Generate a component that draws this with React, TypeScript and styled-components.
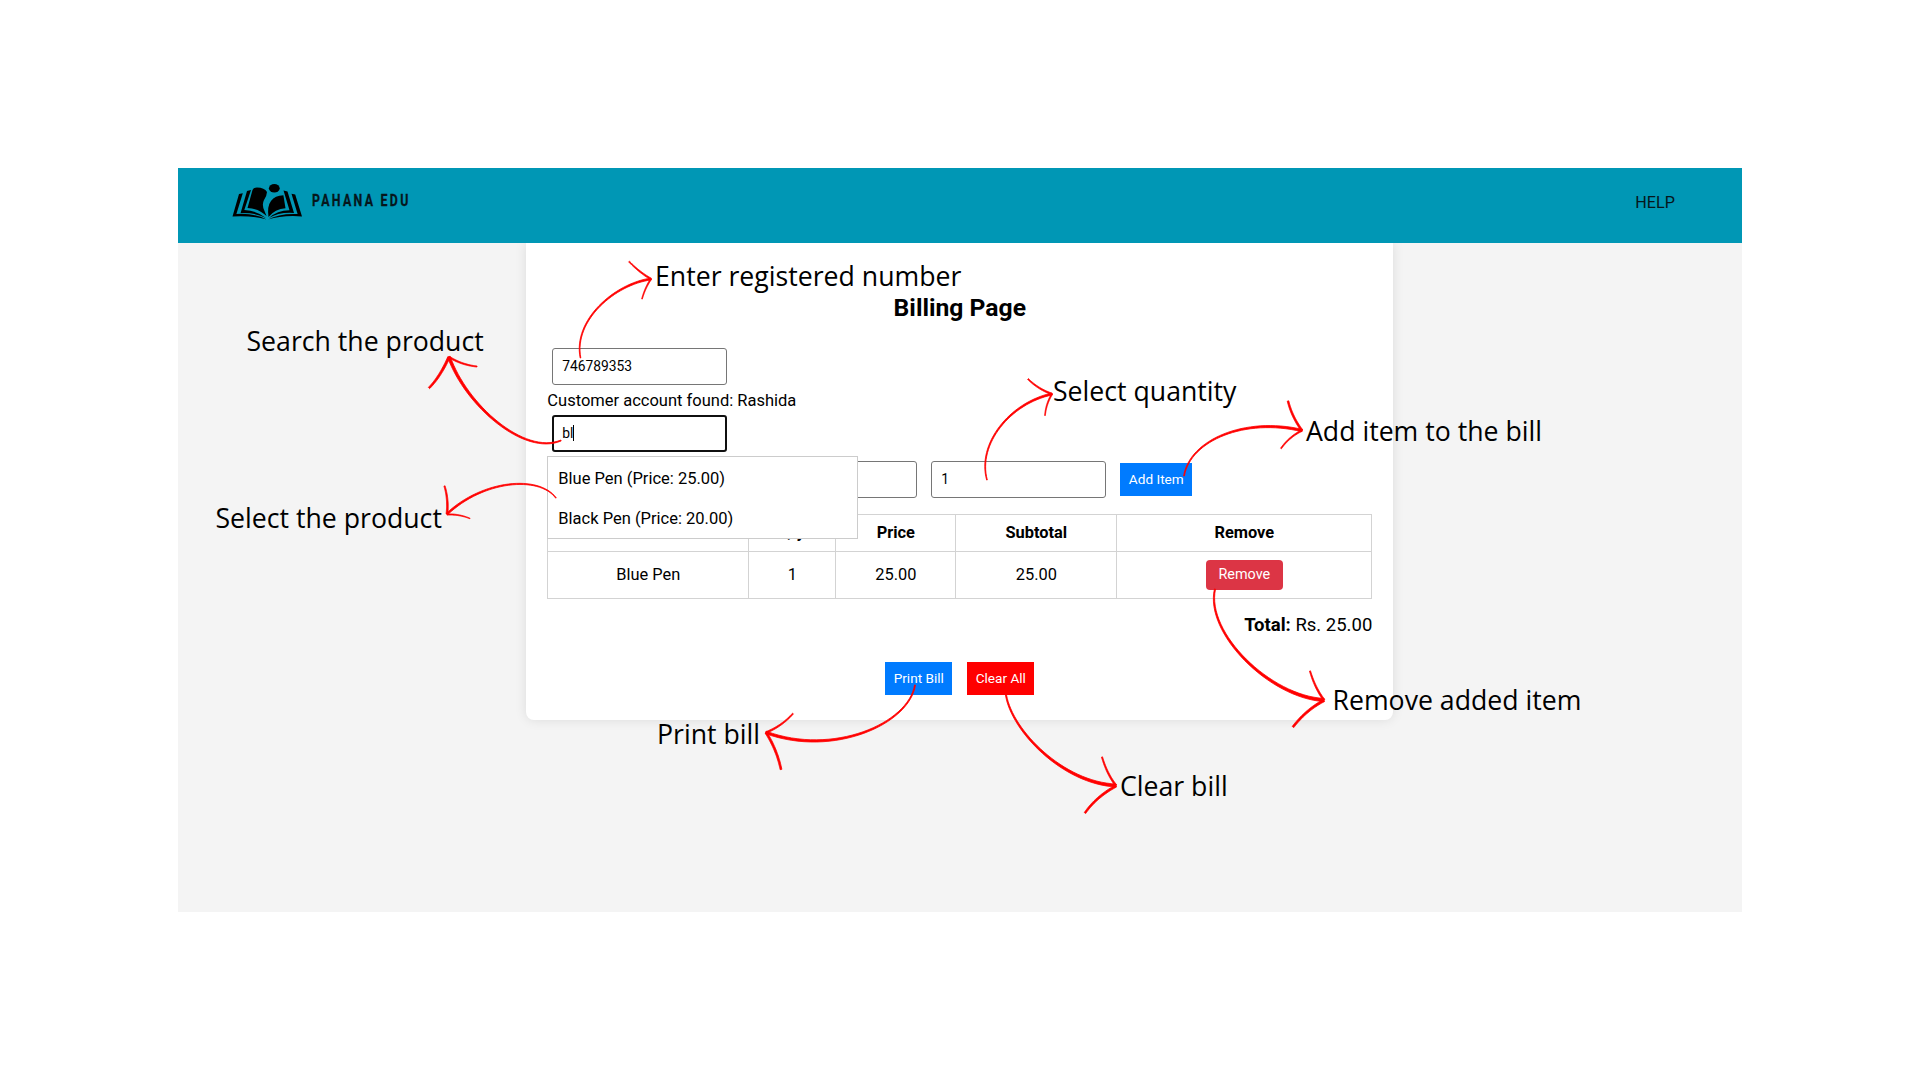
import React from "react";
import styled, { createGlobalStyle } from "styled-components";

const Global = createGlobalStyle`
  *, *::before, *::after { box-sizing: border-box; }
  body { margin: 0; background: #fff; font-family: Roboto, "Liberation Sans", sans-serif; color: #000; }
`;

const Slide = styled.main`
  position: relative;
  width: 1920px;
  height: 1080px;
  padding: 168px 178px 0;
  overflow: hidden;
`;

const Frame = styled.section`
  width: 1564px;
  height: 744px;
  background: #f4f4f4;
  display: flex;
  flex-direction: column;
  align-items: center;
  overflow: hidden;
`;

const Header = styled.header`
  position: relative;
  z-index: 1;
  width: 100%;
  height: 75px;
  flex: none;
  background: #0097b5;
  display: flex;
  justify-content: space-between;
  padding: 0 67px 0 54px;
`;

const Brand = styled.div`
  display: flex;
  padding-top: 15px;
`;

const BrandName = styled.span`
  margin: 8px 0 0 9px;
  font: 700 16px/20px Roboto, sans-serif;
  letter-spacing: 3px;
  transform: scaleX(0.77);
  transform-origin: left;
  white-space: nowrap;
  color: #06161c;
  -webkit-text-stroke: 0.3px #06161c;
`;

const HelpLink = styled.a`
  margin-top: 25px;
  font-size: 16.2px;
  line-height: 20px;
  color: #06161c;
`;

const Card = styled.div`
  width: 867px;
  height: 477px;
  flex: none;
  margin-right: 0.4px;
  padding: 50px 21px 0;
  background: #fff;
  border-radius: 0 0 8px 8px;
  box-shadow: 0 0 12px rgba(0, 0, 0, 0.1);
`;

const Title = styled.h1`
  margin: 0 0 25px;
  font-size: 24.7px;
  line-height: 30px;
  font-weight: 700;
  text-align: center;
`;

const Field = styled.div<{ $active?: boolean }>`
  width: 175px;
  height: 37px;
  display: flex;
  align-items: center;
  padding-left: ${(p) => (p.$active ? 8 : 9)}px;
  padding-bottom: 1px;
  border: ${(p) => (p.$active ? "2px solid #101010" : "1px solid #767676")};
  border-radius: 3px;
  background: #fff;
  font-size: 13.8px;
`;

const Caret = styled.i`
  width: 1px;
  height: 16px;
  background: #000;
`;

const FormColumn = styled.div`
  padding-left: 5px;
`;

const Note = styled.p`
  margin: 6px 0 5px -5px;
  font-size: 16.5px;
  line-height: 19px;
`;

const Lookup = styled.div`
  position: relative;
`;

const Suggestions = styled.ul`
  position: absolute;
  z-index: 2;
  top: 41px;
  left: -5px;
  width: 311px;
  height: 83px;
  margin: 0;
  padding: 2px 10px 0;
  list-style: none;
  background: #fff;
  border: 1px solid #ccc;
`;

const Suggestion = styled.li`
  font-size: 16.5px;
  line-height: 40px;
`;

const ItemRow = styled.div`
  display: flex;
  align-items: center;
  gap: 14px;
  margin-top: 9px;
  padding-left: 195px;
`;

const Button = styled.button<{ $tone: string; $w: number }>`
  width: ${(p) => p.$w}px;
  height: 33px;
  padding: 0 0 1px;
  border: 0;
  background: ${(p) => p.$tone};
  color: #fff;
  font: 13.6px Roboto, sans-serif;
`;

const RemoveButton = styled.button`
  display: block;
  width: 77px;
  height: 30px;
  margin: 0 auto;
  padding: 0;
  border: 0;
  border-radius: 4px;
  background: #dc3545;
  color: #fff;
  font: 14.4px Roboto, sans-serif;
`;

const Table = styled.table`
  width: 825px;
  margin-top: 16px;
  table-layout: fixed;
  border-collapse: collapse;
  font-size: 16.4px;
  text-align: center;
  th, td { border: 1px solid #d3d3d3; padding: 0 0 1px; }
  thead tr { height: 37px; }
  tbody tr { height: 47px; }
`;

const Total = styled.p`
  margin: 15px 0 26px;
  font-size: 18.5px;
  line-height: 22px;
  text-align: right;
`;

const Actions = styled.div`
  display: flex;
  justify-content: center;
  gap: 15px;
`;

const Overlay = styled.svg`
  position: absolute;
  z-index: 3;
  inset: 0;
`;

const Label = styled.span<{ $x: number; $y: number }>`
  position: absolute;
  z-index: 4;
  left: ${(p) => p.$x}px;
  top: ${(p) => p.$y}px;
  font: 400 26.67px/36px "Open Sans", sans-serif;
  white-space: nowrap;
`;

const BookLogo = () => (
  <svg width="71" height="37" viewBox="0 0 71 37">
    <path d="M20.5 7 Q21.5 4.5 25 4.5 Q32.5 4.5 35 9 Q34.8 13 32 17 Q29.5 22 32.5 28 L34.5 33 Q27 25.5 15.5 25 Z" />
    <path d="M15 8 L19 7 L12.3 27 Q26 28 34 35 Q24 29.5 8.6 30 Z" />
    <path d="M7 11 L10.8 10.3 L4.4 31 Q24 30 34.5 36.6 Q20 32.4 0.5 33.5 Z" />
    <ellipse cx="42.3" cy="5.3" rx="5.4" ry="4.3" />
    <path d="M36.5 34 Q35 23 39 18 Q43 12.5 51.4 12.3 L53.5 25.3 Q43 26 36.5 34Z" />
    <path d="M51.5 7.5 L55.5 8.5 L62 30 Q47 29 37 35 Q45 27.3 57.5 27.2 Z" />
    <path d="M59.5 10.8 L63.2 11.6 L70 33.4 Q50 32 36 36.6 Q47 30.2 65.6 31Z" />
  </svg>
);

type Stroke = { points: number[]; from: number; to: number };

/* Outlines a quadratic or cubic curve whose thickness changes along its length. */
function taper({ points, from, to }: Stroke) {
  const left: string[] = [];
  const right: string[] = [];
  const cubic = points.length === 8;
  const [x0, y0, x1, y1, x2, y2] = points;
  const [x3, y3] = points.slice(6);
  for (let i = 0; i <= 32; i++) {
    const t = i / 32;
    const u = 1 - t;
    const at = (a: number, b: number, c: number, d: number) =>
      cubic ? u * u * u * a + 3 * u * u * t * b + 3 * u * t * t * c + t * t * t * d : u * u * a + 2 * u * t * b + t * t * c;
    const slope = (a: number, b: number, c: number, d: number) =>
      cubic ? u * u * (b - a) + 2 * u * t * (c - b) + t * t * (d - c) : u * (b - a) + t * (c - b);
    const x = at(x0, x1, x2, x3);
    const y = at(y0, y1, y2, y3);
    const dx = slope(x0, x1, x2, x3);
    const dy = slope(y0, y1, y2, y3);
    const half = (from + (to - from) * t) / 2 / Math.hypot(dx, dy);
    left.push(`${(x - dy * half).toFixed(2)} ${(y + dx * half).toFixed(2)}`);
    right.unshift(`${(x + dy * half).toFixed(2)} ${(y - dx * half).toFixed(2)}`);
  }
  return `M${left.join("L")}L${right.join("L")}Z`;
}

const strokes: Stroke[] = [
  { points: [580.5, 358, 573, 320, 615, 284, 651, 279], from: 0.7, to: 1.9 },
  { points: [629, 261.5, 639, 272, 651, 279], from: 1, to: 1.6 },
  { points: [642, 299, 645, 288, 651, 279], from: 0.7, to: 1.3 },

  { points: [561, 440.5, 524, 456, 466, 405, 449, 357], from: 1, to: 2.8 },
  { points: [477, 366.5, 462, 365, 449, 357], from: 1, to: 1.6 },
  { points: [429, 388, 440, 377, 449, 357], from: 1.8, to: 2.4 },

  { points: [556, 498, 539, 475, 483, 480, 447, 514], from: 0.6, to: 1.9 },
  { points: [444.5, 486, 448.5, 499, 447, 514], from: 1.2, to: 1.8 },
  { points: [470, 518.5, 459, 514, 447, 514.5], from: 0.6, to: 1.2 },

  { points: [987, 480, 977, 444, 1010, 403, 1052, 394], from: 0.7, to: 2 },
  { points: [1028, 379, 1038, 389, 1052, 394], from: 1.1, to: 1.6 },
  { points: [1045, 415.5, 1046, 404, 1052, 394], from: 0.7, to: 1.3 },

  { points: [1184, 476, 1190, 440, 1245, 417, 1302, 430.5], from: 0.8, to: 2.4 },
  { points: [1288, 401, 1292, 417, 1302, 430.5], from: 1.6, to: 2 },
  { points: [1281, 448.5, 1289, 437, 1302, 430.5], from: 1, to: 1.5 },

  { points: [1215, 589, 1205, 633, 1270, 697, 1324, 700], from: 1.1, to: 3.2 },
  { points: [1310, 671, 1315, 688, 1324, 700], from: 1.1, to: 1.9 },
  { points: [1293, 727, 1306, 710, 1324, 700.5], from: 2, to: 2.4 },

  { points: [915, 685, 909, 724, 833, 757, 766, 732.5], from: 0.9, to: 2.6 },
  { points: [793, 713.5, 782, 726, 766, 732.5], from: 1.1, to: 1.7 },
  { points: [781, 769.5, 777, 750, 766, 732.5], from: 1.8, to: 2.2 },

  { points: [1006, 695, 1012, 731, 1063, 783, 1116, 785.5], from: 1.1, to: 3 },
  { points: [1102, 757, 1107, 774, 1116, 785.5], from: 1.1, to: 1.8 },
  { points: [1085, 813, 1096, 797, 1116, 786], from: 1.8, to: 2.3 },
];

const labels = [
  { text: "Enter registered number", x: 655, y: 258 },
  { text: "Search the product", x: 246.5, y: 323 },
  { text: "Select the product", x: 215.5, y: 500 },
  { text: "Select quantity", x: 1053, y: 373 },
  { text: "Add item to the bill", x: 1306, y: 413 },
  { text: "Remove added item", x: 1332.5, y: 682 },
  { text: "Print bill", x: 657, y: 716 },
  { text: "Clear bill", x: 1120, y: 768 },
];

export default function App() {
  return (
    <Slide>
      <Global />
      <Frame>
        <Header>
          <Brand>
            <BookLogo />
            <BrandName>PAHANA EDU</BrandName>
          </Brand>
          <HelpLink>HELP</HelpLink>
        </Header>
        <Card>
          <Title>Billing Page</Title>
          <FormColumn>
            <Field>746789353</Field>
            <Note>Customer account found: Rashida</Note>
            <Lookup>
              <Field $active>bl<Caret /></Field>
              <Suggestions>
                <Suggestion>Blue Pen (Price: 25.00)</Suggestion>
                <Suggestion>Black Pen (Price: 20.00)</Suggestion>
              </Suggestions>
            </Lookup>
          </FormColumn>
          <ItemRow>
            <Field />
            <Field>1</Field>
            <Button $tone="#007bff" $w={72}>Add Item</Button>
          </ItemRow>
          <Table>
            <colgroup>
              <col style={{ width: 201 }} />
              <col style={{ width: 87 }} />
              <col style={{ width: 120 }} />
              <col style={{ width: 161 }} />
              <col />
            </colgroup>
            <thead>
              <tr><th>Item</th><th>Qty</th><th>Price</th><th>Subtotal</th><th>Remove</th></tr>
            </thead>
            <tbody>
              <tr><td>Blue Pen</td><td>1</td><td>25.00</td><td>25.00</td><td><RemoveButton>Remove</RemoveButton></td></tr>
            </tbody>
          </Table>
          <Total><b>Total:</b> Rs. 25.00</Total>
          <Actions>
            <Button $tone="#007bff" $w={67}>Print Bill</Button>
            <Button $tone="#ff0000" $w={67}>Clear All</Button>
          </Actions>
        </Card>
      </Frame>
      <Overlay width="1920" height="1080" fill="#f00" stroke="#f00" strokeWidth="0.8" strokeLinejoin="round">
        {strokes.map((s, i) => (
          <path key={i} d={taper(s)} />
        ))}
      </Overlay>
      {labels.map((l) => (
        <Label key={l.text} $x={l.x} $y={l.y}>{l.text}</Label>
      ))}
    </Slide>
  );
}
